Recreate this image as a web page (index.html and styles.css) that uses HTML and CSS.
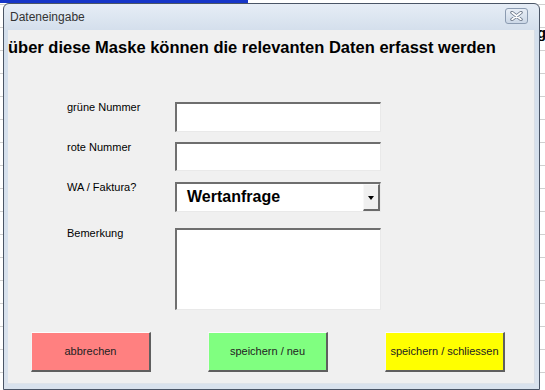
FILE: index.html
```html
<!DOCTYPE html>
<html>

<head>
    <meta charset="UTF-8">
    <title>Dateneingabe</title>
    <link rel="stylesheet" href="styles.css">
</head>

<body>
    <div class="topbar"><div class="selection"></div></div>
    <div class="sheet">
        <div class="gutter"></div>
        <div class="dialog">
            <div class="titlebar">
                <span class="title">Dateneingabe</span>
                <a href="javascript:;" class="close">
                    <svg width="13" height="10" viewBox="0 0 13 10">
                        <path d="M2 1.5 L11 8.5 M11 1.5 L2 8.5" stroke="#6a7688" stroke-width="3.4" stroke-linecap="round" fill="none" />
                        <path d="M2 1.5 L11 8.5 M11 1.5 L2 8.5" stroke="#ffffff" stroke-width="1.6" stroke-linecap="round" fill="none" />
                    </svg>
                </a>
            </div>
            <div class="client">
                <h1 class="heading">über diese Maske können die relevanten Daten erfasst werden</h1>
                <div class="form">
                    <div class="row row-first">
                        <label class="label">grüne Nummer</label>
                        <div class="field field-text"></div>
                    </div>
                    <div class="row row-second">
                        <label class="label">rote Nummer</label>
                        <div class="field field-text2"></div>
                    </div>
                    <div class="row row-combo">
                        <label class="label">WA / Faktura?</label>
                        <div class="field combo">
                            <span class="combo-value">Wertanfrage</span>
                            <span class="combo-btn"><i class="arrow-down"></i></span>
                        </div>
                    </div>
                    <div class="row row-memo">
                        <label class="label">Bemerkung</label>
                        <div class="field field-memo"></div>
                    </div>
                </div>
                <div class="buttons">
                    <a href="javascript:;" class="btn btn-red">abbrechen</a>
                    <a href="javascript:;" class="btn btn-green">speichern / neu</a>
                    <a href="javascript:;" class="btn btn-yellow">speichern / schliessen</a>
                </div>
            </div>
        </div>
        <div class="rest"><span class="cell">g</span></div>
    </div>
</body>

</html>
```

FILE: styles.css
```css
@charset "UTF-8";
/* reset */
body,
h1,
label {
    margin: 0;
    padding: 0;
}

body {
    font: 11px/1.2 "Liberation Sans", Arial, sans-serif;
    color: #000;
    background-color: #fff;
    /* Tabellenraster hinter dem Formular */
    background-image: repeating-linear-gradient(to bottom, transparent 0, transparent 4px, #d0d0d0 4px, #d0d0d0 5px, transparent 5px, transparent 23px);
    width: 545px;
    height: 390px;
    overflow: hidden;
}

a {
    text-decoration: none;
    color: inherit;
}

.topbar {
    height: 3px;
    background: #fff;
}

.selection {
    width: 248px;
    height: 3px;
    background: #1535c8;
}

.sheet {
    display: flex;
    align-items: flex-start;
}

.gutter {
    width: 3px;
    flex: none;
}

/* Fenster */
.dialog {
    width: 537px;
    flex: none;
    box-sizing: border-box;
    border: 1px solid #4a5566;
    border-radius: 6px 6px 0 0;
    background: linear-gradient(to bottom, #e6edf6 0, #d4dfec 26px, #d9e2ed 100%);
    padding: 0 4px 5px;
}

.titlebar {
    height: 26px;
    display: flex;
    align-items: center;
    justify-content: space-between;
}

.title {
    font-size: 12px;
    color: #333;
    padding-left: 2px;
    padding-top: 1px;
}

.close {
    width: 21px;
    height: 14px;
    margin-right: 7px;
    margin-top: -3px;
    border: 1px solid #8b9bb1;
    border-radius: 3px;
    background: linear-gradient(to bottom, #e8eef6, #ccd8e7);
    display: flex;
    align-items: center;
    justify-content: center;
}

.close svg {
    display: block;
}

.client {
    height: 354px;
    box-sizing: border-box;
    background: #f0f0f0;
    border-right: 1px solid #d9dee5;
    border-bottom: 1px solid #dfe4ea;
    padding-top: 7px;
}

.heading {
    font-size: 16.5px;
    line-height: 20px;
    font-weight: bold;
    white-space: nowrap;
}

/* Eingabefelder */
.form {
    padding-left: 59px;
    margin-top: 45px;
}

.row {
    display: grid;
    grid-template-columns: 108px 206px;
    align-items: start;
}

.label {
    display: block;
    font-size: 11px;
    line-height: 13px;
    margin-top: -1px;
}

.field {
    box-sizing: border-box;
    background: #fff;
    border-style: solid;
    border-width: 2px 1px 1px 2px;
    border-color: #6e6e6e #e9e9e9 #e9e9e9 #707070;
}

.field-text {
    height: 30px;
}

.row-second {
    margin-top: 10px;
}

.field-text2 {
    height: 29px;
}

.row-combo {
    margin-top: 11px;
}

.combo {
    height: 30px;
    display: flex;
    align-items: stretch;
}

.combo-value {
    flex: 1;
    font-size: 16px;
    font-weight: bold;
    line-height: 26px;
    padding-left: 10px;
}

.combo-btn {
    width: 17px;
    box-sizing: border-box;
    background: #f0f0f0;
    border-style: solid;
    border-width: 1px 2px 2px 1px;
    border-color: #f8f8f8 #6a6a6a #6a6a6a #f8f8f8;
    display: flex;
    align-items: center;
    justify-content: center;
}

.arrow-down {
    width: 0;
    height: 0;
    border-left: 3.5px solid transparent;
    border-right: 3.5px solid transparent;
    border-top: 4px solid #000;
    margin-top: 2px;
}

.row-memo {
    margin-top: 16px;
}

.field-memo {
    height: 82px;
}

/* Schaltflaechen */
.buttons {
    display: flex;
    gap: 57px;
    padding-left: 23px;
    margin-top: 22px;
}

.btn {
    width: 120px;
    height: 40px;
    box-sizing: border-box;
    display: flex;
    align-items: center;
    justify-content: center;
    font-size: 11px;
    color: #222;
    border-style: solid;
    border-width: 1px 2px 2px 1px;
    border-color: #fdfdfd #5f5f5f #5f5f5f #f4f4f4;
}

.btn-red {
    background: #ff8080;
}

.btn-green {
    background: #80ff80;
}

.btn-yellow {
    background: #ffff00;
}

.rest {
    flex: 1;
    overflow: hidden;
    padding-top: 22px;
}

.cell {
    font: bold 15px/16px "Liberation Sans", Arial, sans-serif;
    margin-left: -3px;
}
```
